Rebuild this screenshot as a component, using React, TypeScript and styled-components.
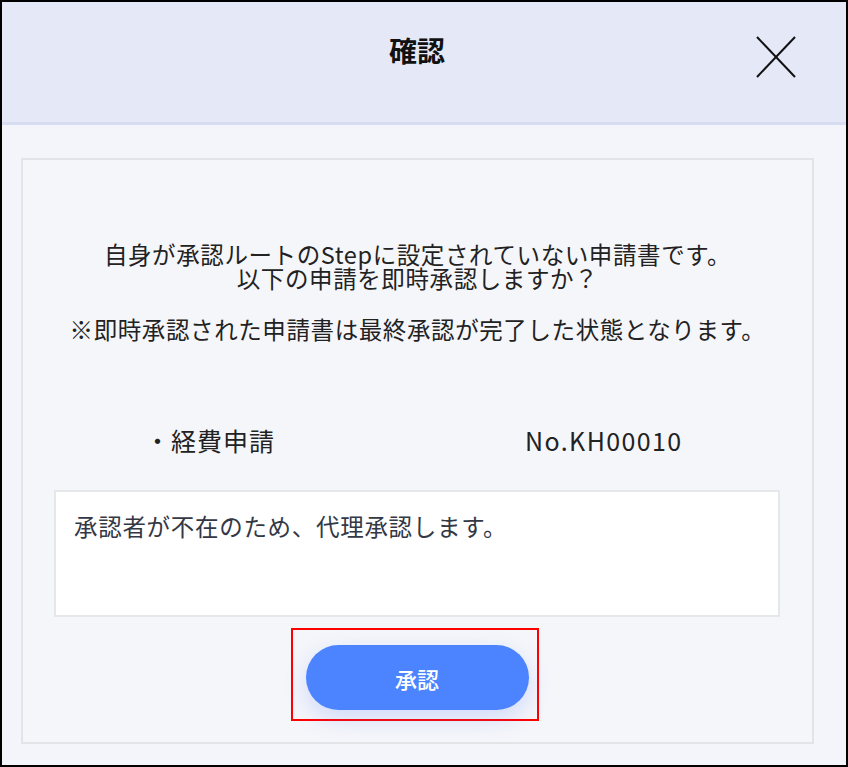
import React from "react";
import styled, { createGlobalStyle } from "styled-components";

const Global = createGlobalStyle`
  html, body { margin: 0; padding: 0; background: #ffffff; }
  * { box-sizing: border-box; }
  body { font-family: "Noto Sans CJK JP", "Noto Sans", sans-serif; }
`;

const Frame = styled.div`
  width: 848px;
  height: 767px;
  border: 2px solid #000;
  background: #f4f5fa;
  display: flex;
  flex-direction: column;
`;

const Header = styled.header`
  height: 123px;
  flex: none;
  background: #e4e8f7;
  border-bottom: 3px solid #d8dcf1;
  display: grid;
  grid-template-columns: 1fr auto 1fr;
  align-items: start;
`;

const Title = styled.h1`
  grid-column: 2;
  margin: 33px 14px 0 0;
  font-size: 28px;
  line-height: 30px;
  font-weight: 700;
  color: #111;
  letter-spacing: 0;
`;

const CloseButton = styled.button`
  grid-column: 3;
  justify-self: end;
  margin: 34px 50px 0 0;
  width: 40px;
  height: 42px;
  padding: 0;
  border: none;
  background: transparent;
  display: flex;
  align-items: center;
  justify-content: center;
  cursor: pointer;
`;

const Body = styled.main`
  flex: 1;
  padding: 33px 32px 21px 19px;
  display: flex;
`;

const Card = styled.section`
  flex: 1;
  border: 2px solid #e3e4e8;
  background: #f5f6fa;
  padding: 82px 0 21px;
  display: flex;
  flex-direction: column;
  align-items: center;
  color: #222;
`;

const Message = styled.p<{ $gap?: number }>`
  margin: ${(p) => p.$gap ?? 0}px 0 0;
  font-size: 23.5px;
  line-height: 24px;
  text-align: center;
  letter-spacing: 0.6px;
  white-space: pre-line;
`;

const ItemRow = styled.div`
  align-self: stretch;
  margin-top: 87px;
  padding-left: 122px;
  display: flex;
  font-size: 25px;
  line-height: 25px;
  color: #222;
`;

const ItemName = styled.span`
  width: 380px;
  letter-spacing: 1px;
`;

const ItemNo = styled.span`
  letter-spacing: 1.4px;
`;

const CommentBox = styled.div`
  align-self: stretch;
  margin: 37px 32px 0 31px;
  height: 127px;
  background: #fff;
  border: 2px solid #e6e7ea;
  padding: 19px 18px;
  font-size: 23.5px;
  line-height: 30px;
  color: #333845;
  letter-spacing: 0.7px;
`;

const Highlight = styled.div`
  margin: 11px 0 0 -6px;
  border: 2px solid #ff0000;
  padding: 15px 8px 9px 13px;
`;

const PrimaryButton = styled.button`
  width: 223px;
  height: 65px;
  border: none;
  border-radius: 33px;
  background: #4c83ff;
  color: #fff;
  font-family: "Noto Sans CJK JP", "Noto Sans", sans-serif;
  font-size: 22px;
  font-weight: 500;
  box-shadow: 0 8px 22px rgba(76, 120, 255, 0.22);
  cursor: pointer;
`;

export default function App() {
  return (
    <>
      <Global />
      <Frame>
        <Header>
          <Title>確認</Title>
          <CloseButton aria-label="閉じる">
            <svg width="40" height="42" viewBox="0 0 40 42">
              <line x1="1" y1="1" x2="39" y2="41" stroke="#111" strokeWidth="2" />
              <line x1="39" y1="1" x2="1" y2="41" stroke="#111" strokeWidth="2" />
            </svg>
          </CloseButton>
        </Header>
        <Body>
          <Card>
            <Message>{"自身が承認ルートのStepに設定されていない申請書です。\n以下の申請を即時承認しますか？"}</Message>
            <Message $gap={27}>※即時承認された申請書は最終承認が完了した状態となります。</Message>
            <ItemRow>
              <ItemName>・経費申請</ItemName>
              <ItemNo>No.KH00010</ItemNo>
            </ItemRow>
            <CommentBox>承認者が不在のため、代理承認します。</CommentBox>
            <Highlight>
              <PrimaryButton>承認</PrimaryButton>
            </Highlight>
          </Card>
        </Body>
      </Frame>
    </>
  );
}
